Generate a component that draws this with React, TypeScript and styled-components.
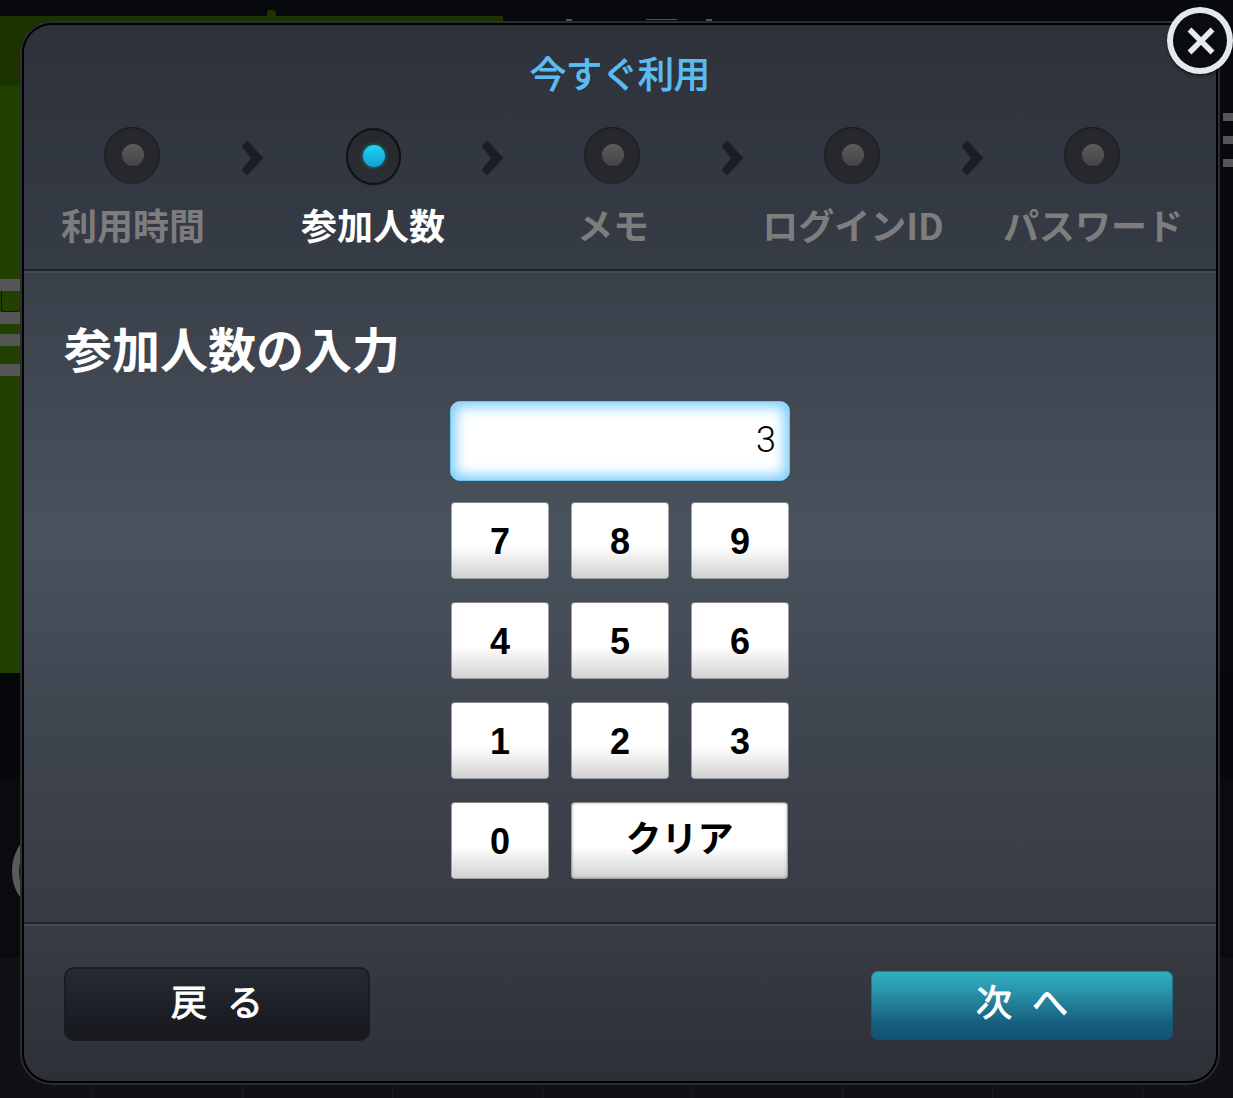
import styled, { createGlobalStyle } from 'styled-components';

const GlobalStyle = createGlobalStyle`
  html,
  body {
    margin: 0;
    padding: 0;
    background: #07090d;
  }
`;

const jpFont = `'Noto Sans CJK JP', 'Noto Sans', sans-serif`;
const latinFont = `'Liberation Sans', Arial, sans-serif`;

const steps = [
  { label: '利用時間', active: false },
  { label: '参加人数', active: true },
  { label: 'メモ', active: false },
  { label: 'ログインID', active: false },
  { label: 'パスワード', active: false },
];

const keyRows = [
  ['7', '8', '9'],
  ['4', '5', '6'],
  ['1', '2', '3'],
];

const App = () => {
  return (
    <Page>
      <GlobalStyle />
      <TopBar>
        <GreenBump />
      </TopBar>
      <UpperRow>
        <GreenArea>
          <Fragments>
            <Fragment />
            <FragmentBox />
            <Fragment />
            <Fragment />
            <Fragment />
          </Fragments>
        </GreenArea>
        <UpperDark>
          <Tick $left={63} $width={6} $height={3} />
          <Tick $left={74} $width={31} $height={1} />
          <Tick $left={29} $width={6} $height={3} />
        </UpperDark>
      </UpperRow>
      <DarkArea>
        <TickStrip />
      </DarkArea>
      <BackCircle />
      <RightGlyph>
        <i />
        <i />
        <i />
      </RightGlyph>
      <Modal>
        <Header>
          <Title>今すぐ利用</Title>
          <Steps>
            {steps.map((step, id) => (
              <StepGroup key={step.label}>
                <Step>
                  <Lamp $active={step.active}>
                    <LampDot $active={step.active} />
                  </Lamp>
                  <StepLabel $active={step.active}>{step.label}</StepLabel>
                </Step>
                {id < steps.length - 1 && (
                  <Arrow viewBox="0 0 23 36">
                    <path d="M0.5 6 L6 0.5 L22.5 18 L6 35.5 L0.5 30 L10 18 Z" />
                  </Arrow>
                )}
              </StepGroup>
            ))}
          </Steps>
        </Header>
        <Content>
          <Heading>参加人数の入力</Heading>
          <Pad>
            <Display>3</Display>
            {keyRows.map((row) => (
              <KeyRow key={row[0]}>
                {row.map((key) => (
                  <Key key={key}>{key}</Key>
                ))}
              </KeyRow>
            ))}
            <KeyRow>
              <Key>0</Key>
              <ClearKey>クリア</ClearKey>
            </KeyRow>
          </Pad>
        </Content>
        <Footer>
          <BackButton>戻 る</BackButton>
          <NextButton>次 へ</NextButton>
        </Footer>
      </Modal>
      <CloseButton>
        <CloseIcon width="30" height="30" viewBox="0 0 30 30">
          <path
            d="M3.5 3.5 L26.5 26.5 M26.5 3.5 L3.5 26.5"
            stroke="#e8ebee"
            strokeWidth="5.5"
          />
        </CloseIcon>
      </CloseButton>
    </Page>
  );
};

export default App;

const Page = styled.div`
  position: relative;
  width: 1233px;
  height: 1098px;
  overflow: hidden;
  background: #07090d;
`;

const TopBar = styled.div`
  height: 16px;
  display: flex;
  align-items: flex-end;
`;

const GreenBump = styled.div`
  width: 9px;
  height: 6px;
  margin-left: 267px;
  border-radius: 3px 3px 0 0;
  background: #1c3300;
`;

const UpperRow = styled.div`
  display: flex;
  height: 657px;
`;

const GreenArea = styled.div`
  width: 503px;
  padding-top: 263px;
  box-sizing: border-box;
  background: linear-gradient(#1c3300 0, #1c3300 69px, #224000 70px, #224000 100%);
`;

const UpperDark = styled.div`
  flex: 1;
  display: flex;
  align-items: flex-start;
  padding-top: 3px;
`;

const Tick = styled.div<{ $left: number; $width: number; $height: number }>`
  margin-left: ${(p) => p.$left}px;
  width: ${(p) => p.$width}px;
  height: ${(p) => p.$height}px;
  background: #55575a;
`;

const Fragments = styled.div`
  width: 20px;
  display: flex;
  flex-direction: column;
`;

const Fragment = styled.div`
  height: 12px;
  background: #555555;
  &:nth-child(4) {
    margin-top: 10px;
  }
  &:nth-child(5) {
    margin-top: 18px;
  }
`;

const FragmentBox = styled.div`
  height: 21px;
  margin-left: 1px;
  border-radius: 0 0 4px 4px;
  box-shadow: inset 1px 0 0 #0e1a00, inset 0 -1px 0 #0e1a00;
`;

const DarkArea = styled.div`
  height: 425px;
  display: flex;
  flex-direction: column;
  justify-content: flex-end;
  background: linear-gradient(
    #06080b 0,
    #06080b 105px,
    #030405 105px,
    #030405 106px,
    #0a0b0e 106px,
    #0a0b0e 285px,
    #101114 285px
  );
`;

const TickStrip = styled.div`
  height: 13px;
  background: repeating-linear-gradient(
    90deg,
    transparent 0 17px,
    #141518 17px 18px,
    transparent 18px 92px,
    #1b1c1f 92px 93px,
    transparent 93px 150px
  );
`;

const BackCircle = styled.div`
  position: absolute;
  left: 12px;
  top: 825px;
  width: 92px;
  height: 92px;
  border: 7px solid #5a5a5a;
  border-radius: 50%;
  box-sizing: border-box;
`;

const RightGlyph = styled.div`
  position: absolute;
  left: 1223px;
  top: 113px;
  width: 10px;
  display: flex;
  flex-direction: column;
  gap: 15px;
  i {
    display: block;
    height: 8px;
    background: #555555;
  }
`;

const Modal = styled.div`
  position: absolute;
  left: 22px;
  top: 23px;
  width: 1196px;
  height: 1060px;
  box-sizing: border-box;
  display: flex;
  flex-direction: column;
  border: 2px solid #000;
  border-radius: 30px;
  overflow: hidden;
  box-shadow: 0 0 0 2px #2c2d30;
`;

const Header = styled.div`
  height: 246px;
  flex: none;
  background: linear-gradient(#2d323a, #363c46);
  box-shadow: inset 0 -2px 0 #20242b;
`;

const Title = styled.div`
  padding-top: 20px;
  height: 54px;
  text-align: center;
  font: 400 36px/54px ${jpFont};
  -webkit-text-stroke: 1px #5cbcf2;
  color: #5cbcf2;
`;

const Steps = styled.div`
  display: flex;
  padding-left: 18px;
  margin-top: 28px;
`;

const StepGroup = styled.div`
  display: flex;
`;

const Step = styled.div`
  width: 180px;
  display: flex;
  flex-direction: column;
  align-items: center;
`;

const Lamp = styled.div<{ $active: boolean }>`
  width: ${(p) => (p.$active ? 55 : 56)}px;
  height: 57px;
  margin: ${(p) => (p.$active ? '1px 0 -1px 2px' : '0')};
  display: flex;
  align-items: center;
  justify-content: center;
  border-radius: 50%;
  background: ${(p) =>
    p.$active ? 'linear-gradient(#25282c, #2b2e33)' : '#26282c'};
  box-shadow: ${(p) =>
    p.$active
      ? 'inset 0 0 0 2px #101214, 0 1px 1px #2a2e35'
      : 'inset 0 1px 1px #1d1e21, inset 0 0 2px #1f2023'};
`;

const LampDot = styled.div<{ $active: boolean }>`
  width: 22px;
  height: 22px;
  margin-left: 1px;
  margin-bottom: 1px;
  border-radius: 50%;
  background: ${(p) =>
    p.$active
      ? 'linear-gradient(#1ed8ee, #109fd8)'
      : 'linear-gradient(#5c5c5e, #444446)'};
  box-shadow: ${(p) => (p.$active ? '0 0 4px rgba(30, 200, 240, 0.6)' : 'none')};
`;

const StepLabel = styled.div<{ $active: boolean }>`
  margin-top: 13px;
  margin-left: 2px;
  white-space: nowrap;
  font: 700 36px/54px ${jpFont};
  color: ${(p) => (p.$active ? '#ffffff' : '#7d7d7d')};
`;

const Arrow = styled.svg`
  width: 23px;
  height: 36px;
  margin: 13px 18px 0 19px;
  fill: #1b1f24;
`;

const Content = styled.div`
  height: 653px;
  flex: none;
  box-sizing: border-box;
  padding: 0 40px;
  background: linear-gradient(#3a404a 0, #49525d 41%, #3f454f 70%, #373b43 100%);
  box-shadow: inset 0 2px 0 #454b57;
  border-bottom: 2px solid #22252c;
`;

const Heading = styled.div`
  height: 130px;
  padding-top: 40px;
  box-sizing: border-box;
  font: 700 48px/72px ${jpFont};
  color: #ffffff;
`;

const Pad = styled.div`
  width: 340px;
  margin: 0 auto;
  display: flex;
  flex-direction: column;
  align-items: center;
`;

const Display = styled.div`
  width: 340px;
  height: 80px;
  box-sizing: border-box;
  padding-right: 13px;
  text-align: right;
  font: 300 36px/76px Roboto, ${latinFont};
  color: #000;
  background: #ffffff;
  border: 1px solid #6cc4f4;
  border-radius: 10px;
  box-shadow: inset 0 0 14px 4px #72c9fa;
  margin-bottom: 21px;
`;

const KeyRow = styled.div`
  width: 338px;
  display: flex;
  gap: 22px;
  margin-bottom: 23px;
`;

const Key = styled.div`
  width: 98px;
  height: 77px;
  box-sizing: border-box;
  text-align: center;
  font: 700 36px/77px ${latinFont};
  color: #000;
  background: linear-gradient(#ffffff 0, #ffffff 58%, #d2d2d2 100%);
  border: 1px solid #9d9fa3;
  border-top-color: #85878b;
  border-radius: 4px;
`;

const ClearKey = styled(Key)`
  width: 217px;
  font: 700 36px/66px ${jpFont};
  box-shadow: inset 0 0 3px rgba(120, 120, 120, 0.6);
`;

const Footer = styled.div`
  flex: 1;
  display: flex;
  align-items: flex-start;
  justify-content: space-between;
  padding: 43px 43px 0 40px;
  background: linear-gradient(#393c44, #2d3037);
  box-shadow: inset 0 2px 0 #444953;
`;

const BackButton = styled.div`
  width: 306px;
  height: 74px;
  box-sizing: border-box;
  text-align: center;
  white-space: pre;
  word-spacing: 12px;
  font: 400 36px/62px ${jpFont};
  -webkit-text-stroke: 1px #fff;
  color: #fff;
  background: linear-gradient(#262a32, #16181d);
  border: 2px solid #191c22;
  border-radius: 10px;
`;

const NextButton = styled.div`
  width: 302px;
  height: 69px;
  margin-top: 4px;
  text-align: center;
  white-space: pre;
  word-spacing: 12px;
  font: 400 36px/58px ${jpFont};
  -webkit-text-stroke: 1px #fff;
  color: #fff;
  background: linear-gradient(#30b1c3 0, #2a93a9 30%, #175f7f 75%, #125274 100%);
  border-radius: 7px;
  box-shadow: inset 0 0 0 1px rgba(25, 80, 100, 0.5);
`;

const CloseButton = styled.div`
  position: absolute;
  left: 1167px;
  top: 7px;
  width: 66px;
  height: 67px;
  box-sizing: border-box;
  display: flex;
  align-items: center;
  justify-content: center;
  background: #0a0c10;
  border: 6px solid #e6e9ec;
  border-radius: 50%;
  box-shadow: 0 2px 3px rgba(0, 0, 0, 0.5);
`;

const CloseIcon = styled.svg`
  margin-left: 2px;
`;
